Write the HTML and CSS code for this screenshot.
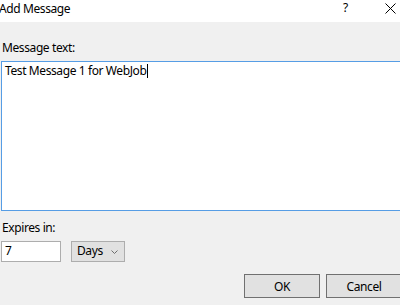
FILE: index.html
```html
<!DOCTYPE html>
<html lang="en">
<head>
    <meta charset="UTF-8">
    <meta name="viewport" content="width=device-width, initial-scale=1.0">
    <title>Add Message</title>
    <link rel="stylesheet" href="styles.css">
</head>
<body>
    <div class="dialog">
        <div class="titlebar">
            <span class="title">Add Message</span>
            <span class="help">?</span>
            <span class="close">
                <svg width="11" height="11" viewBox="0 0 11 11"><path d="M0.5 0.5 L10.5 10.5 M10.5 0.5 L0.5 10.5" stroke="#000" stroke-width="1" fill="none"/></svg>
            </span>
        </div>
        <div class="content">
            <div class="field-label">Message text:</div>
            <div class="message-box">Test Message 1 for WebJob<span class="caret"></span></div>

            <div class="field-label expires-label">Expires in:</div>
            <div class="expires-row">
                <div class="text-input">7</div>
                <div class="dropdown">
                    <span>Days</span>
                    <svg width="7" height="4" viewBox="0 0 7 4"><path d="M0.5 0.5 L3.5 3.5 L6.5 0.5" stroke="#6d6d6d" stroke-width="1" fill="none"/></svg>
                </div>
            </div>

            <div class="actions">
                <button class="btn">OK</button>
                <button class="btn">Cancel</button>
            </div>
        </div>
    </div>
</body>
</html>
```

FILE: styles.css
```css
body {
    margin: 0;
    padding: 0;
    width: 400px;
    height: 305px;
    overflow: hidden;
    font-family: 'Noto Sans', sans-serif;
    font-size: 12px;
    line-height: 16px;
    letter-spacing: -0.4px;
    color: #000;
    background-color: #f0f0f0;
}
.dialog {
    width: 402px;
    height: 305px;
    display: flex;
    flex-direction: column;
}
.titlebar {
    height: 22px;
    background-color: #fff;
    display: flex;
    align-items: flex-start;
    flex-shrink: 0;
}
.title {
    margin-left: -1px;
    margin-top: 1px;
    flex: 1;
}
.help {
    margin-top: 0px;
    width: 10px;
    margin-right: 32px;
}
.close {
    margin-top: 3px;
    margin-right: 6px;
    display: flex;
}
.content {
    flex: 1;
    padding: 18px 0 0 1px;
    display: flex;
    flex-direction: column;
}
.field-label {
    padding-left: 1px;
    height: 16px;
    margin-bottom: 5px;
}
.message-box {
    border: 1px solid #569de5;
    background-color: #fff;
    padding: 1px 3px;
    box-sizing: border-box;
    height: 150px;
}
.caret {
    display: inline-block;
    width: 1px;
    height: 14px;
    background-color: #000;
    vertical-align: -3px;
    margin-left: 1px;
}
.expires-label {
    margin-top: 9px;
}
.expires-row {
    display: flex;
    gap: 10px;
}
.text-input {
    width: 60px;
    height: 21px;
    box-sizing: border-box;
    border: 1px solid #adadad;
    background-color: #fff;
    padding: 1px 3px;
}
.dropdown {
    width: 54px;
    height: 21px;
    box-sizing: border-box;
    border: 1px solid #adadad;
    background-color: #e1e1e1;
    padding: 1px 5px 1px 5px;
    display: flex;
    align-items: center;
    justify-content: space-between;
}
.dropdown span {
    margin-top: -1px;
}
.dropdown svg {
    margin-right: 1px;
}
.actions {
    margin-top: 12px;
    display: flex;
    justify-content: flex-end;
    gap: 6px;
}
.btn {
    width: 76px;
    height: 24px;
    border: 1px solid #707070;
    background-color: #e1e1e1;
    font-family: inherit;
    font-size: 12px;
    letter-spacing: -0.4px;
    color: #000;
    padding: 0;
}
```
